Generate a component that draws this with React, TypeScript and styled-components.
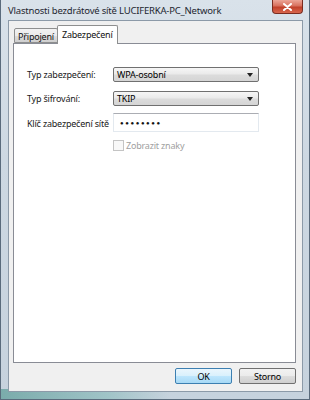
import React, { useState } from 'react'
import styled, { createGlobalStyle } from 'styled-components'

const GlobalStyle = createGlobalStyle`
  html, body {
    margin: 0;
    padding: 0;
    width: 310px;
    height: 400px;
    overflow: hidden;
    font-family: 'Noto Sans', 'Liberation Sans', sans-serif;
  }
`

export default function App () {
  const [tab, setTab] = useState(1)

  return (
    <Window>
      <GlobalStyle />
      <TitleBar>
        <Title>Vlastnosti bezdrátové sítě LUCIFERKA-PC_Network</Title>
        <CloseButton aria-label='Zavřít'>
          <svg width='9' height='8' viewBox='0 0 9 8'>
            <path d='M1 1 L8 7 M8 1 L1 7' stroke='#fff' strokeWidth='2' strokeLinecap='round' />
          </svg>
        </CloseButton>
      </TitleBar>
      <Client>
        <TabStrip>
          <Tab active={tab === 0} onClick={() => setTab(0)}>Připojení</Tab>
          <Tab active={tab === 1} onClick={() => setTab(1)}>Zabezpečení</Tab>
        </TabStrip>
        <Panel>
          <Form>
            <Label>Typ zabezpečení:</Label>
            <Combo>
              <span>WPA-osobní</span>
              <Arrow />
            </Combo>
            <Label>Typ šifrování:</Label>
            <Combo>
              <span>TKIP</span>
              <Arrow />
            </Combo>
            <Label>Klíč zabezpečení sítě</Label>
            <KeyInput>●●●●●●●●</KeyInput>
            <span />
            <CheckRow>
              <CheckBox />
              <span>Zobrazit znaky</span>
            </CheckRow>
          </Form>
        </Panel>
        <Buttons>
          <Button primary>OK</Button>
          <Button>Storno</Button>
        </Buttons>
      </Client>
    </Window>
  )
}

const Window = styled.div`
  width: 310px;
  height: 400px;
  box-sizing: border-box;
  display: flex;
  flex-direction: column;
  padding: 0 6px 7px 7px;
  border: 1px solid #5a6b7c;
  border-top: none;
  background:
    linear-gradient(90deg, rgba(60, 140, 130, 0.55) 0%, rgba(90, 170, 160, 0.35) 35%, rgba(200, 215, 225, 0) 55%) bottom / 100% 10px no-repeat,
    linear-gradient(180deg, #d9e2ea 0%, #cdd8e2 40%, #c6d2dd 100%);
`

const TitleBar = styled.div`
  height: 20px;
  display: flex;
  align-items: flex-start;
  justify-content: space-between;
`

const Title = styled.div`
  margin-top: 4px;
  font-size: 9.5px;
  letter-spacing: -0.2px;
  color: #1e2630;
  white-space: nowrap;
`

const CloseButton = styled.div`
  width: 31px;
  height: 14px;
  box-sizing: border-box;
  border: 1px solid #7a2c20;
  border-top: none;
  border-radius: 0 0 4px 4px;
  display: flex;
  align-items: center;
  justify-content: center;
  background: linear-gradient(180deg, #eca597 0%, #d8705d 45%, #c1402a 55%, #d8674e 100%);
`

const Client = styled.div`
  flex: 1;
  display: flex;
  flex-direction: column;
  background: #f0f0f0;
  border: 1px solid #8c9aa8;
  padding: 3px 6px 0 4px;
  font-size: 9px;
  letter-spacing: -0.2px;
`

const TabStrip = styled.div`
  display: flex;
  align-items: flex-end;
  height: 19px;
  padding-left: 1px;
  position: relative;
  z-index: 1;
`

const Tab = styled.div<{ active?: boolean }>`
  box-sizing: border-box;
  height: ${p => (p.active ? '19px' : '15px')};
  margin-bottom: ${p => (p.active ? '-1px' : '0')};
  margin-left: ${p => (p.active ? '-1px' : '0')};
  padding: ${p => (p.active ? '2px 4px 0' : '1px 3px 0')};
  color: #111;
  border: 1px solid #8e8f8f;
  border-bottom: ${p => (p.active ? 'none' : '1px solid #8e8f8f')};
  border-radius: 2px 2px 0 0;
  background: ${p => (p.active ? '#fff' : 'linear-gradient(180deg, #f2f2f2 0%, #ebebeb 50%, #dddddd 51%, #cfcfcf 100%)')};
  cursor: default;
`

const Panel = styled.div`
  height: 320px;
  box-sizing: border-box;
  background: #fff;
  border: 1px solid #898c95;
  padding: 23px 0 0 13px;
`

const Form = styled.div`
  display: grid;
  grid-template-columns: 86px 146px;
  row-gap: 9px;
  align-items: center;
  color: #1a1a1a;
`

const Label = styled.span`
  white-space: nowrap;
`

const Combo = styled.div`
  height: 15px;
  box-sizing: border-box;
  border: 1px solid #707070;
  border-radius: 2px;
  padding: 0 5px 0 3px;
  display: flex;
  align-items: center;
  justify-content: space-between;
  background: linear-gradient(180deg, #f6f6f6 0%, #eaeaea 48%, #dcdcdc 52%, #d5d5d5 100%);
  color: #000;
`

const Arrow = styled.span`
  width: 0;
  height: 0;
  border-left: 3px solid transparent;
  border-right: 3px solid transparent;
  border-top: 4px solid #222;
`

const KeyInput = styled.div`
  height: 19px;
  box-sizing: border-box;
  border: 1px solid #e3e9ef;
  border-top-color: #abadb3;
  margin-top: -2px;
  padding: 0 0 0 6px;
  display: flex;
  align-items: center;
  font-size: 6px;
  letter-spacing: 1.6px;
  color: #111;
`

const CheckRow = styled.div`
  display: flex;
  align-items: center;
  gap: 2px;
  margin-top: -2px;
  color: #a0a0a0;
`

const CheckBox = styled.span`
  width: 9px;
  height: 9px;
  border: 1px solid #c4c4c4;
  background: #f8f8f8;
`

const Buttons = styled.div`
  display: flex;
  justify-content: flex-end;
  gap: 7px;
  padding-top: 5px;
`

const Button = styled.div<{ primary?: boolean }>`
  width: 57px;
  height: 16px;
  box-sizing: border-box;
  border: 1px solid ${p => (p.primary ? '#3c7fb1' : '#707070')};
  border-radius: 2px;
  display: flex;
  align-items: center;
  justify-content: center;
  color: #000;
  background: ${p =>
    p.primary
      ? 'linear-gradient(180deg, #eaf6fd 0%, #d9f0fc 50%, #bee6fd 51%, #a7d9f5 100%)'
      : 'linear-gradient(180deg, #f2f2f2 0%, #ebebeb 50%, #dddddd 51%, #cfcfcf 100%)'};
`
